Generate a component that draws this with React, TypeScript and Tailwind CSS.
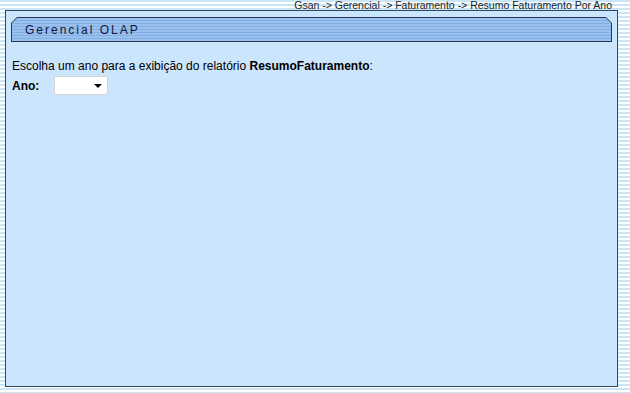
export default function App() {
  return (
    <div className="w-[630px] h-[393px] overflow-hidden bg-white [background-image:repeating-linear-gradient(to_bottom,#c9e5f6_0px,#c9e5f6_2px,#ffffff_2px,#ffffff_4px)] font-['Liberation_Sans',Arial,sans-serif] text-black">
      {/* breadcrumb */}
      <div className="h-[10px] pr-[18px] text-right text-[10.5px] leading-[10px] text-[#222] whitespace-nowrap">
        Gsan -&gt; Gerencial -&gt; Faturamento -&gt; Resumo Faturamento Por Ano
      </div>

      {/* main panel */}
      <div className="ml-[5px] w-[613px] h-[377px] border border-[#2d4862] bg-[#cbe5fd] px-[5px] pt-[6px]">
        <div className="h-[25px] bg-[#24384f] p-px [clip-path:polygon(6px_0,calc(100%-6px)_0,100%_6px,100%_100%,0_100%,0_6px)]">
          <div className="h-full flex items-center pl-[13px] text-[12px] tracking-[2px] text-[#151540] [background-image:repeating-linear-gradient(to_bottom,#9ac1ee_0px,#9ac1ee_2px,#82afe3_2px,#82afe3_3px)] [clip-path:polygon(5px_0,calc(100%-5px)_0,100%_5px,100%_100%,0_100%,0_5px)]">
            Gerencial OLAP
          </div>
        </div>

        <div className="mt-[17px] pl-px text-[12px] leading-[15px]">
          Escolha um ano para a exibição do relatório <b>ResumoFaturamento</b>:
        </div>
        <div className="mt-[2px] flex items-center pl-px text-[12px]">
          <b className="w-[42px]">Ano:</b>
          <div className="w-[54px] h-[19px] bg-white border border-[#d4d4d4] rounded-[2px] flex items-center justify-end pr-[5px]">
            <svg width="8" height="4" viewBox="0 0 8 4">
              <path d="M0 0h8L4 4z" fill="#000" />
            </svg>
          </div>
        </div>
      </div>
    </div>
  );
}
